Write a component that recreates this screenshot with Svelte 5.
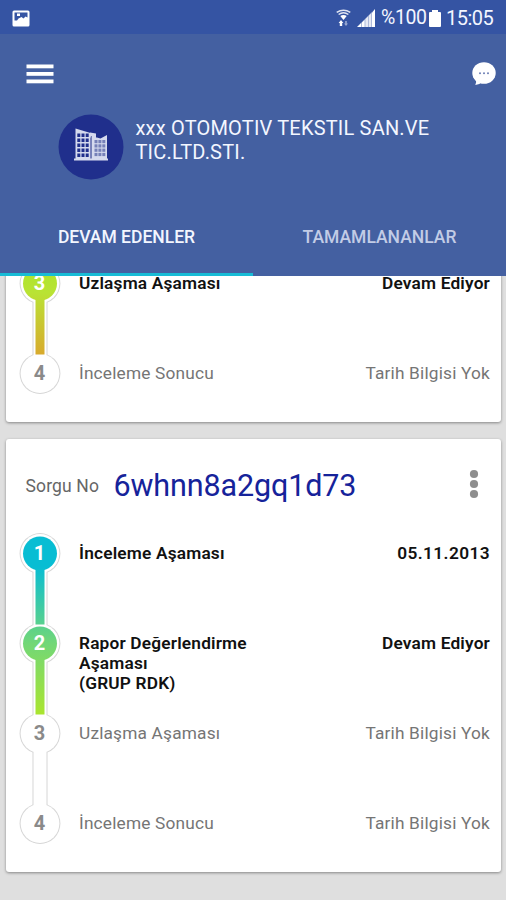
<script>
  let activeTab = 0;

  const tabs = ['DEVAM EDENLER', 'TAMAMLANANLAR'];

  const STEP = 90;

  const queries = [
    {
      no: null,
      steps: [
        { n: 3, title: ['Uzlaşma Aşaması'], info: 'Devam Ediyor', active: true },
        { n: 4, title: ['İnceleme Sonucu'], info: 'Tarih Bilgisi Yok', active: false },
      ],
    },
    {
      no: '6whnn8a2gq1d73',
      steps: [
        { n: 1, title: ['İnceleme Aşaması'], info: '05.11.2013', active: true },
        { n: 2, title: ['Rapor Değerlendirme', 'Aşaması', '(GRUP RDK)'], info: 'Devam Ediyor', active: true },
        { n: 3, title: ['Uzlaşma Aşaması'], info: 'Tarih Bilgisi Yok', active: false },
        { n: 4, title: ['İnceleme Sonucu'], info: 'Tarih Bilgisi Yok', active: false },
      ],
    },
  ];

  const trackHeight = (steps) => (steps.length - 1) * STEP + 41;
</script>

<div class="app">
  <header class="header">
    <div class="status-bar">
      <svg class="picture" width="18" height="17" viewBox="0 0 18 17">
        <rect x="0.5" y="0.5" width="17" height="16" rx="1.5" fill="#fff" />
        <path d="M2.500 2.500h13v5l-2-1-2 2-2-1.500-3 1.500-1.500 2h-2.500z" fill="#3554a3" />
        <path d="M5 3.500h3v2.500H5z" fill="#fff" />
      </svg>
      <div class="status-right">
        <svg class="wifi" width="15" height="18" viewBox="0 0 15 18">
          <g fill="none" stroke="#fff" stroke-width="1.500" opacity=".85">
            <path d="M.7 3.300Q7.500-1 14.300 3.300" />
            <path d="M2.600 5.500Q7.500 2 12.400 5.500" />
          </g>
          <path d="M4.300 7Q7.500 4.800 10.700 7L7.500 11z" fill="#fff" />
          <path d="M5 11l2.400 3H6.200v3H3.800v-3H2.600z" fill="#fff" />
          <path d="M10 17l-2-2.500h1.200V12h1.600v2.500H12z" fill="#fff" opacity=".5" />
        </svg>
        <svg class="signal" width="18" height="18" viewBox="0 0 18 18">
          <path d="M0 18L4 14v4zM5 13.500L7.500 11v7H5z" fill="#fff" />
          <path d="M4 14L15 3V18H4z" fill="#fff" opacity=".6" />
          <path d="M8.500 10L11 7.500V18H8.500zM12 6.500l2-2V18h-2z" fill="#fff" opacity=".7" />
          <path d="M15 3.500L18 0v18h-3z" fill="#fff" />
        </svg>
        <span class="percent">%100</span>
        <svg class="battery" width="12" height="17" viewBox="0 0 12 17">
          <path d="M3 0h6v2h2q1 0 1 1v13q0 1-1 1H1q-1 0-1-1V3q0-1 1-1h2z" fill="#fff" />
        </svg>
        <span class="clock">15:05</span>
      </div>
    </div>

    <div class="toolbar">
      <button class="icon-btn" aria-label="Menü">
        <svg width="28" height="20" viewBox="0 0 28 20" fill="#fff">
          <rect x="0.500" y="0.500" width="27" height="3.800" />
          <rect x="0.500" y="8" width="27" height="3.800" />
          <rect x="0.500" y="15.500" width="27" height="3.800" />
        </svg>
      </button>
      <button class="icon-btn" aria-label="Mesajlar">
        <svg width="24" height="24" viewBox="0 0 24 24">
          <ellipse cx="12" cy="11" rx="11.700" ry="10.800" fill="#fff" />
          <path d="M3.500 17Q5 20 3.300 23 8 22.500 10 20z" fill="#fff" />
          <g fill="#6c7fb5">
            <circle cx="8" cy="11.300" r="1" />
            <circle cx="12" cy="11.300" r="1" />
            <circle cx="16" cy="11.300" r="1" />
          </g>
        </svg>
      </button>
    </div>

    <div class="company">
      <svg width="66" height="66" viewBox="0 0 66 66">
        <circle cx="33" cy="33" r="32.500" fill="#202f8c" />
        <g fill="#d5daee">
          <path d="M17.500 14.500l15 4.500v26h-15z" />
          <path d="M32 18.500l6 1v4h-6zM33.500 22l9 2.500 6.500-3.500v24H33.500z" />
          <rect x="16" y="44.500" width="34" height="2" />
        </g>
        <g fill="#202f8c">
          {#each [0, 1, 2, 3, 4] as r}
            {#each [0, 1, 2] as c}
              <rect x={19.300 + c * 4.200} y={19.500 + r * 5} width="3" height="3.500" />
            {/each}
          {/each}
        </g>
        <g fill="#7681b8">
          {#each [0, 1, 2, 3] as r}
            {#each [0, 1, 2] as c}
              <rect x={36.500 + c * 3.900} y={26 + r * 4.300} width="3" height="3.200" />
            {/each}
          {/each}
          <path d="M32.800 22h1.200v22h-1.200z" />
        </g>
      </svg>
      <h1>xxx OTOMOTIV TEKSTIL SAN.VE<br />TIC.LTD.STI.</h1>
    </div>

    <nav class="tabs">
      {#each tabs as tab, i}
        <button class="tab" class:selected={activeTab === i} on:click={() => (activeTab = i)}>{tab}</button>
      {/each}
    </nav>
  </header>

  <main class="list">
    {#each queries as query, q}
      <section class="card" class:scrolled={!query.no}>
        {#if query.no}
          <div class="card-head">
            <span class="label">Sorgu No</span>
            <span class="query-no">{query.no}</span>
            <button class="icon-btn more" aria-label="Seçenekler">
              <svg width="10" height="30" viewBox="0 0 10 30" fill="#8e8e8e">
                <circle cx="5" cy="5" r="4.100" />
                <circle cx="5" cy="15" r="4.100" />
                <circle cx="5" cy="25" r="4.100" />
              </svg>
            </button>
          </div>
        {/if}

        <div class="stepper">
          <svg class="track" width="42" height={trackHeight(query.steps)}>
            <defs>
              <linearGradient
                id="track-{q}"
                gradientUnits="userSpaceOnUse"
                x1="0"
                x2="0"
                y1={20.500 - (query.steps[0].n - 1) * STEP}
                y2={20.500 + (4 - query.steps[0].n) * STEP}
              >
                <stop offset="0.05" stop-color="#08bdd3" />
                <stop offset="0.333" stop-color="#72d777" />
                <stop offset="0.6" stop-color="#abe52d" />
                <stop offset="0.7" stop-color="#b9e334" />
                <stop offset="0.95" stop-color="#dba52c" />
              </linearGradient>
            </defs>
            <!-- outline, then white body, then the coloured part -->
            <g fill="#d6d6d6">
              <rect x="13.500" y="20" width="15" height={(query.steps.length - 1) * STEP} />
              {#each query.steps as step, i}
                <circle cx="21" cy={20.500 + i * STEP} r="20.400" />
              {/each}
            </g>
            <g fill="#fff">
              <rect x="14.500" y="20" width="13" height={(query.steps.length - 1) * STEP} />
              {#each query.steps as step, i}
                <circle cx="21" cy={20.500 + i * STEP} r="19.400" />
              {/each}
            </g>
            <g fill="url(#track-{q})">
              {#each query.steps as step, i}
                {#if step.active}
                  <circle cx="21" cy={20.500 + i * STEP} r="17" />
                  <rect x="16.500" y={20.500 + i * STEP} width="9" height={STEP - 19} />
                {/if}
              {/each}
            </g>
            {#each query.steps as step, i}
              <text class="num" class:active={step.active} x="20.500" y={26.500 + i * STEP}>{step.n}</text>
            {/each}
          </svg>
          <ol class="steps">
            {#each query.steps as step}
              <li class="step" class:active={step.active}>
                <span class="title">
                  {#each step.title as line}
                    <span>{line}</span>
                  {/each}
                </span>
                <span class="info" class:date={step.info.includes('.')}>{step.info}</span>
              </li>
            {/each}
          </ol>
        </div>
      </section>
    {/each}
  </main>
</div>

<style>
  :global(body) {
    background: #dfdfdf;
  }

  .app {
    width: 506px;
    height: 900px;
    overflow: hidden;
    background: #dfdfdf;
    font-family: Roboto, 'Noto Sans', sans-serif;
  }

  .header {
    position: relative;
    z-index: 1;
    display: flex;
    flex-direction: column;
    height: 275.5px;
    background: #4460a1;
    color: #f3f6ff;
  }

  .status-bar {
    display: flex;
    align-items: center;
    justify-content: space-between;
    box-sizing: border-box;
    height: 34px;
    padding: 2px 13px 0 12px;
    background: #3554a3;
  }

  .status-right {
    display: flex;
    align-items: center;
    font-size: 20px;
    line-height: 24px;
  }

  .signal {
    margin: 0 6px 0 6px;
  }

  .percent {
    width: 45px;
    font-size: 19.5px;
    letter-spacing: -0.4px;
  }

  .battery {
    margin: 0 5px 0 3px;
  }

  .clock {
    width: 47px;
    letter-spacing: -0.5px;
  }

  .icon-btn {
    display: flex;
    padding: 0;
    border: none;
    background: none;
    cursor: pointer;
  }

  .toolbar {
    display: flex;
    align-items: center;
    justify-content: space-between;
    height: 79px;
    padding: 0 10px 0 26px;
  }

  .company {
    display: flex;
    gap: 11.5px;
    height: 86px;
    padding: 1px 0 0 58px;
  }

  h1 {
    margin: 2px 0 0;
    font-size: 20px;
    font-weight: 400;
    line-height: 24px;
    letter-spacing: 0.19px;
    white-space: nowrap;
  }

  .tabs {
    display: flex;
    flex: 1;
  }

  .tab {
    flex: 1;
    padding: 2px 0 0;
    border: none;
    border-bottom: 3px solid transparent;
    background: none;
    color: #c2cce6;
    font-family: inherit;
    font-size: 17.5px;
    font-weight: 500;
    cursor: pointer;
  }

  .tab.selected {
    border-bottom-color: #17bcd6;
    color: #f3f6ff;
  }

  .list {
    display: flex;
    flex-direction: column;
    gap: 17px;
    padding: 0 5px 0 6px;
  }

  .card {
    border-radius: 3px;
    background: #fff;
    box-shadow: 0 1px 3px rgba(0, 0, 0, 0.4);
    padding: 0 11px 28px 13px;
  }

  .card.scrolled {
    margin-top: -13px;
  }

  .card-head {
    display: flex;
    align-items: center;
    height: 94px;
    padding-left: 6.5px;
  }

  .label {
    width: 88px;
    color: #666;
    font-size: 17.5px;
    letter-spacing: 0.15px;
  }

  .query-no {
    flex: 1;
    color: #16239a;
    font-size: 30.5px;
    line-height: 40px;
    letter-spacing: -0.12px;
  }

  .more {
    margin: -4px 11px 0 0;
  }

  .stepper {
    display: flex;
    gap: 18px;
  }

  .track {
    flex: none;
  }

  .num {
    fill: #8a8a8a;
    font-size: 20px;
    font-weight: 700;
    text-anchor: middle;
  }

  .num.active {
    fill: #fff;
  }

  .steps {
    flex: 1;
    margin: 0;
    padding: 0;
    list-style: none;
  }

  .step {
    display: flex;
    justify-content: space-between;
    box-sizing: border-box;
    height: 90px;
    padding-top: 10px;
    color: #757575;
    font-size: 17.3px;
    line-height: 20.3px;
    letter-spacing: 0.18px;
    white-space: nowrap;
  }

  .step:last-child {
    height: 41px;
  }

  .step.active {
    color: #111;
    font-weight: 600;
  }

  .title span {
    display: block;
  }

  .info.date {
    letter-spacing: 0.4px;
  }
</style>
